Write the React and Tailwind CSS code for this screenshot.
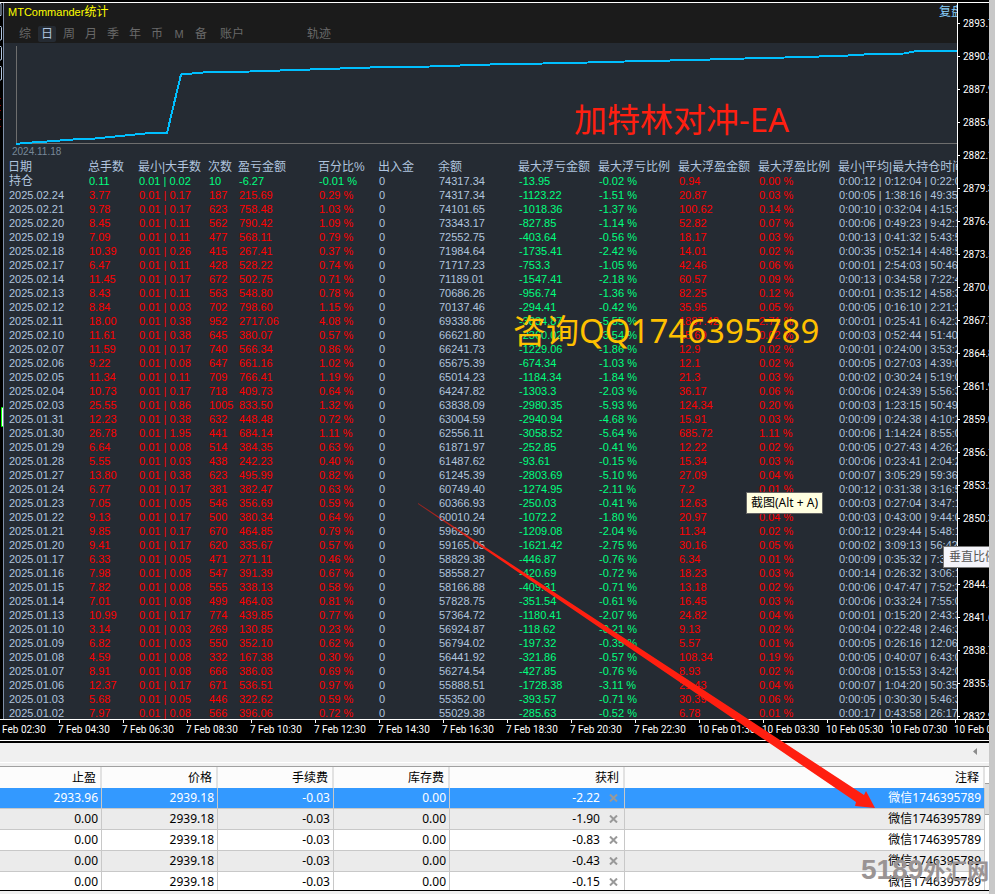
import { useState } from 'react'
import clsx from 'clsx'

const tabs = ['综', '日', '周', '月', '季', '年', '币', 'M', '备']

const columns = [
  { label: '日期', width: 'w-[80px]', tone: 'text-[#b0c4de]' },
  { label: '总手数', width: 'w-[50px]', tone: 'text-[#ff0000]' },
  { label: '最小|大手数', width: 'w-[70px]', tone: 'text-[#ff0000]' },
  { label: '次数', width: 'w-[30px]', tone: 'text-[#ff0000]' },
  { label: '盈亏金额', width: 'w-[80px]', tone: 'text-[#ff0000]' },
  { label: '百分比%', width: 'w-[60px]', tone: 'text-[#ff0000]' },
  { label: '出入金', width: 'w-[60px]', tone: 'text-[#b0c4de]' },
  { label: '余额', width: 'w-[80px]', tone: 'text-[#b0c4de]' },
  { label: '最大浮亏金额', width: 'w-[80px]', tone: 'text-[#00ff7f]' },
  { label: '最大浮亏比例', width: 'w-[80px]', tone: 'text-[#00ff7f]' },
  { label: '最大浮盈金额', width: 'w-[80px]', tone: 'text-[#ff0000]' },
  { label: '最大浮盈比例', width: 'w-[80px]', tone: 'text-[#ff0000]' },
  { label: '最小|平均|最大持仓时间', width: '', tone: 'text-[#b0c4de]' },
]

// date, lots, max lot, orders, profit, %, balance, float loss, %, float gain, %, holding times
const days = [
  ['持仓', '0.11', '0.02', '10', '-6.27', '-0.01', '74317.34', '-13.95', '-0.02', '0.94', '0.00', '0:00:12 | 0:12:04 | 0:22:01'],
  ['2025.02.24', '3.77', '0.17', '187', '215.69', '0.29', '74317.34', '-1123.22', '-1.51', '20.87', '0.03', '0:00:05 | 1:38:16 | 49:35:1'],
  ['2025.02.21', '9.78', '0.17', '623', '758.48', '1.03', '74101.65', '-1018.36', '-1.37', '100.62', '0.14', '0:00:10 | 0:32:04 | 4:15:30'],
  ['2025.02.20', '8.45', '0.11', '562', '790.42', '1.09', '73343.17', '-827.85', '-1.14', '52.82', '0.07', '0:00:06 | 0:49:23 | 9:42:11'],
  ['2025.02.19', '7.09', '0.11', '477', '568.11', '0.79', '72552.75', '-403.64', '-0.56', '18.17', '0.03', '0:00:13 | 0:41:32 | 5:43:50'],
  ['2025.02.18', '10.39', '0.26', '415', '267.41', '0.37', '71984.64', '-1735.41', '-2.42', '14.01', '0.02', '0:00:35 | 0:52:14 | 4:48:51'],
  ['2025.02.17', '6.47', '0.11', '428', '528.22', '0.74', '71717.23', '-753.3', '-1.05', '42.46', '0.06', '0:00:01 | 2:54:03 | 50:46:1'],
  ['2025.02.14', '11.45', '0.17', '672', '502.75', '0.71', '71189.01', '-1547.41', '-2.18', '60.57', '0.09', '0:00:13 | 0:34:58 | 7:22:40'],
  ['2025.02.13', '8.43', '0.11', '563', '548.80', '0.78', '70686.26', '-956.74', '-1.36', '82.25', '0.12', '0:00:01 | 0:35:12 | 4:58:31'],
  ['2025.02.12', '8.84', '0.03', '702', '798.60', '1.15', '70137.46', '-294.41', '-0.42', '35.95', '0.05', '0:00:05 | 0:16:10 | 2:21:30'],
  ['2025.02.11', '18.00', '0.38', '952', '2717.06', '4.08', '69338.86', '-3834.87', '-5.55', '1887.42', '2.71', '0:00:01 | 0:25:41 | 6:42:31'],
  ['2025.02.10', '11.61', '0.38', '645', '380.07', '0.57', '66621.80', '-2360.02', '-3.54', '15.69', '0.02', '0:00:03 | 0:52:44 | 51:40:1'],
  ['2025.02.07', '11.59', '0.17', '740', '566.34', '0.86', '66241.73', '-1229.06', '-1.86', '12.9', '0.02', '0:00:01 | 0:24:00 | 3:53:21'],
  ['2025.02.06', '9.22', '0.08', '647', '661.16', '1.02', '65675.39', '-674.34', '-1.03', '12.1', '0.02', '0:00:05 | 0:27:03 | 4:39:01'],
  ['2025.02.05', '11.34', '0.11', '709', '766.41', '1.19', '65014.23', '-1184.34', '-1.84', '21.3', '0.03', '0:00:02 | 0:30:24 | 5:19:01'],
  ['2025.02.04', '10.73', '0.17', '718', '409.73', '0.64', '64247.82', '-1303.3', '-2.03', '36.17', '0.06', '0:00:06 | 0:24:39 | 5:56:31'],
  ['2025.02.03', '25.55', '0.86', '1005', '833.50', '1.32', '63838.09', '-2980.35', '-5.93', '124.34', '0.20', '0:00:03 | 1:23:15 | 50:49:1'],
  ['2025.01.31', '12.23', '0.38', '632', '448.48', '0.72', '63004.59', '-2940.94', '-4.68', '15.91', '0.03', '0:00:09 | 0:24:38 | 4:10:21'],
  ['2025.01.30', '26.78', '1.95', '441', '684.14', '1.11', '62556.11', '-3058.52', '-5.64', '685.72', '1.11', '0:00:06 | 1:14:24 | 8:55:01'],
  ['2025.01.29', '6.64', '0.08', '514', '384.35', '0.63', '61871.97', '-252.85', '-0.41', '12.22', '0.02', '0:00:05 | 0:27:43 | 4:26:21'],
  ['2025.01.28', '5.55', '0.03', '438', '242.23', '0.40', '61487.62', '-93.61', '-0.15', '15.34', '0.03', '0:00:06 | 0:23:41 | 2:04:21'],
  ['2025.01.27', '13.80', '0.38', '623', '495.99', '0.82', '61245.39', '-2803.69', '-5.10', '27.09', '0.04', '0:00:07 | 3:05:29 | 59:36:1'],
  ['2025.01.24', '6.77', '0.17', '381', '382.47', '0.63', '60749.40', '-1274.95', '-2.11', '7.2', '0.01', '0:00:12 | 0:31:38 | 3:16:51'],
  ['2025.01.23', '7.05', '0.05', '546', '356.69', '0.59', '60366.93', '-250.03', '-0.41', '12.63', '0.02', '0:00:03 | 0:27:04 | 3:47:11'],
  ['2025.01.22', '9.13', '0.17', '500', '380.34', '0.64', '60010.24', '-1072.2', '-1.80', '20.97', '0.04', '0:00:03 | 0:43:00 | 9:44:01'],
  ['2025.01.21', '9.85', '0.17', '670', '464.85', '0.79', '59629.90', '-1209.08', '-2.04', '11.34', '0.02', '0:00:12 | 0:29:44 | 5:48:11'],
  ['2025.01.20', '9.41', '0.17', '620', '335.67', '0.57', '59165.05', '-1621.42', '-2.75', '30.16', '0.05', '0:00:02 | 3:09:13 | 56:42:1'],
  ['2025.01.17', '6.33', '0.05', '471', '271.11', '0.46', '58829.38', '-446.87', '-0.76', '6.34', '0.01', '0:00:09 | 0:35:32 | 7:33:11'],
  ['2025.01.16', '7.98', '0.08', '547', '391.39', '0.67', '58558.27', '-420.69', '-0.72', '18.23', '0.03', '0:00:14 | 0:26:32 | 3:06:11'],
  ['2025.01.15', '7.82', '0.08', '555', '338.13', '0.58', '58166.88', '-409.31', '-0.71', '13.18', '0.02', '0:00:06 | 0:47:47 | 7:52:31'],
  ['2025.01.14', '7.01', '0.08', '499', '464.03', '0.81', '57828.75', '-351.54', '-0.61', '16.45', '0.03', '0:00:06 | 0:33:24 | 7:55:01'],
  ['2025.01.13', '10.99', '0.17', '774', '439.85', '0.77', '57364.72', '-1180.41', '-2.07', '24.82', '0.04', '0:00:01 | 0:15:20 | 2:43:31'],
  ['2025.01.10', '3.14', '0.03', '269', '130.85', '0.23', '56924.87', '-118.62', '-0.21', '9.13', '0.02', '0:00:04 | 0:22:48 | 2:46:31'],
  ['2025.01.09', '6.82', '0.03', '550', '352.10', '0.62', '56794.02', '-197.32', '-0.35', '5.57', '0.01', '0:00:05 | 0:26:16 | 12:06:1'],
  ['2025.01.08', '4.59', '0.08', '332', '167.38', '0.30', '56441.92', '-321.86', '-0.57', '108.34', '0.19', '0:00:05 | 0:40:07 | 6:43:01'],
  ['2025.01.07', '8.91', '0.08', '666', '386.03', '0.69', '56274.54', '-427.85', '-0.76', '8.93', '0.02', '0:00:08 | 0:15:53 | 3:42:01'],
  ['2025.01.06', '12.37', '0.17', '671', '536.51', '0.97', '55888.51', '-1728.38', '-3.11', '21.43', '0.04', '0:00:07 | 1:04:20 | 50:35:1'],
  ['2025.01.03', '5.68', '0.05', '446', '322.62', '0.59', '55352.00', '-393.57', '-0.71', '30.39', '0.06', '0:00:05 | 0:30:30 | 5:46:31'],
  ['2025.01.02', '7.97', '0.08', '566', '396.06', '0.72', '55029.38', '-285.63', '-0.52', '6.78', '0.01', '0:00:17 | 0:43:58 | 26:17:1'],
]

const prices = [
  '2893.7', '2890.8', '2887.9', '2885.0', '2882.1', '2879.3', '2876.4', '2873.5', '2870.6', '2867.7', '2864.8',
  '2861.9', '2859.0', '2856.1', '2853.2', '2850.3', '2847.4', '2844.5', '2841.6', '2838.7', '2835.8', '2832.9',
]

const times = [
  '7 Feb 02:30', '7 Feb 04:30', '7 Feb 06:30', '7 Feb 08:30', '7 Feb 10:30', '7 Feb 12:30', '7 Feb 14:30', '7 Feb 16:30',
  '7 Feb 18:30', '7 Feb 20:30', '7 Feb 22:30', '10 Feb 01:30', '10 Feb 03:30', '10 Feb 05:30', '10 Feb 07:30', '10 Feb 09:30',
]

const orders = [
  { id: 1, tp: '2933.96', profit: '-2.22' },
  { id: 2, tp: '0.00', profit: '-1.90' },
  { id: 3, tp: '0.00', profit: '-0.83' },
  { id: 4, tp: '0.00', profit: '-0.43' },
  { id: 5, tp: '0.00', profit: '-0.15' },
]

const Toolbar = ({ active, onChange }) => (
  <div className="bg-[#1b1b1b] text-[12px] leading-[18px]">
    <div className="flex justify-between pl-1">
      <h1 className="text-[#ffff00]">
        <span className="text-[11px]">MTCommander</span>统计
      </h1>
      <button className="-mr-1.5 text-[#87cefa]">复盘</button>
    </div>
    <div className="flex h-[22px] items-start gap-1 pt-[5px] pl-3 text-[#696969]">
      {tabs.map((tab) => (
        <button
          key={tab}
          onClick={() => onChange(tab)}
          className={clsx(
            'h-4 w-[18px] rounded-xs leading-4',
            tab === 'M' && 'text-[11px]',
            tab === active && 'bg-[#252b33] text-[#b0c4de]'
          )}
        >
          {tab}
        </button>
      ))}
      <button className="ml-1.5 h-4 leading-4">账户</button>
      <button className="ml-[59px] h-4 leading-4">轨迹</button>
    </div>
  </div>
)

const EquityChart = () => (
  <div className="h-[117px]">
    <svg className="block h-[102px] w-full" viewBox="0 0 953 102" preserveAspectRatio="none" shapeRendering="crispEdges">
      <path d="M12.5 3V101M12 100.5H953" stroke="#6e6e6e" fill="none" />
      <path
        d="M12 101L21 100L36 99L50 98L69 96.5L91 95.5L111 93.5L141 90.5L163 90L177 31.5L199 29.5L246 28.5L306 26.5L366 24.5L426 23.5L486 21.5L565 20L621 18.5L689 17L741 15.5L801 14L844 12.5L860 11.5L900 10.5L910 8.5L936 7.5H953"
        stroke="#00bfff"
        strokeWidth="2"
        fill="none"
      />
    </svg>
    <p className="pl-2 text-[10px] leading-[13px] text-[#778899]">2024.11.18</p>
  </div>
)

const StatsTable = () => (
  <table className="-mb-px ml-1 w-full table-fixed text-left text-[11px] leading-[14px] whitespace-nowrap">
    <thead>
      <tr className="h-[14px] text-[12px] text-[#b0c4de]">
        {columns.map((col) => (
          <th key={col.label} className={clsx('p-0 font-normal', col.width)}>{col.label}</th>
        ))}
      </tr>
    </thead>
    <tbody>
      {days.map(([date, lots, maxLot, count, profit, pct, balance, loss, lossPct, gain, gainPct, hold], i) => {
        const cells = [
          date, lots, `0.01 | ${maxLot}`, count, profit, `${pct} %`, '0', balance,
          loss, `${lossPct} %`, gain, `${gainPct} %`, hold,
        ]
        return (
          <tr key={date} className="h-[14px]">
            {cells.map((cell, c) => {
              // open positions sit in the first row and are running at a loss
              const losing = i === 0 && c > 0 && c < 6
              return (
                <td
                  key={columns[c].label}
                  className={clsx('p-0 pl-px', losing ? 'text-[#00ff7f]' : columns[c].tone, i === 0 && c === 0 && 'text-[12px]')}
                >
                  {cell}
                </td>
              )
            })}
          </tr>
        )
      })}
    </tbody>
  </table>
)

const PriceAxis = () => (
  <div className="w-[32px] shrink-0 overflow-hidden border-l border-white pt-1 font-['Roboto','Noto_Sans',sans-serif] text-[10px] text-white">
    <div className="-mb-4">
      {prices.map((price) => (
        <div key={price} className="flex h-[33px] items-center gap-[3px]">
          <span className="h-px w-0.5 shrink-0 bg-white" />
          {price}
        </div>
      ))}
    </div>
  </div>
)

const EdgeStrip = () => (
  <svg className="h-[716px] w-[3px] shrink-0" viewBox="0 0 3 716" fill="none">
    <path
      d="M0 0.5H1V12.5H0M0 23.5H1L1.5 24.5V36L1 37H0M0 43.5H1L1.5 44.5V56L1 57H0M0 63.5H1L1.5 64.5V76L1 77H0"
      stroke="#b0c4de"
    />
    <path d="M0 95.5H1M0 102.5H1M0 107.5H1M0 116.5H1M0 123.5H1" stroke="#8b0000" />
    <path d="M3 404.5H1.5V423.5H3" stroke="#00ff00" />
    <path d="M2 405H3V423H2Z" fill="#fff" />
  </svg>
)

const TimeAxis = () => (
  <div className="flex h-5 overflow-hidden font-['Roboto','Noto_Sans',sans-serif] text-[10px] leading-[14px] text-white">
    <div className="-ml-1.5 flex">
      {times.map((time) => (
        <div key={time} className="w-16 shrink-0 whitespace-nowrap">
          <span className="ml-px block h-[3px] w-px bg-white" />
          {time}
        </div>
      ))}
    </div>
  </div>
)

const headCell = 'border-r-2 border-[#e2e2e2] p-0 pr-1 font-normal'
const bodyCell = 'border-r border-b border-[#c8c8c8] p-0 pr-[3px]'

const OrdersPanel = () => {
  const [selected, setSelected] = useState(1)
  return (
    <section className="font-['Noto_Sans','Noto_Sans_CJK_SC',sans-serif] text-black">
      <div className="flex h-5 items-start justify-end border-b border-white bg-[#f0f0f0] pt-1 pr-3">
        <button aria-label="scroll left" className="mt-px flex">
          <svg className="h-[7px] w-1" viewBox="0 0 4 7"><path d="M4 0V7L0 3.5Z" fill="#8c8c8c" /></svg>
        </button>
      </div>
      <div className="h-1 border-b border-[#a0a0a0] bg-[#f0f0f0]" />
      <div className="flex h-[123px] overflow-hidden bg-white">
        <table className="h-[126px] w-full table-fixed border-separate border-spacing-0 text-right text-[12px] leading-5">
          <thead>
            <tr className="h-[21px] bg-[#fcfcfc]">
              <th className={clsx(headCell, 'w-[102px]')}>止盈</th>
              <th className={clsx(headCell, 'w-[116px]')}>价格</th>
              <th className={clsx(headCell, 'w-[116px]')}>手续费</th>
              <th className={clsx(headCell, 'w-[116px]')}>库存费</th>
              <th className={clsx(headCell, 'w-[175px]')}>获利</th>
              <th className={headCell}>注释</th>
            </tr>
          </thead>
          <tbody>
            {orders.map((order) => (
              <tr
                key={order.id}
                onClick={() => setSelected(order.id)}
                className={clsx(
                  'h-[21px]',
                  order.id === selected ? 'bg-[#3399ff] text-white' : order.id % 2 ? 'bg-white' : 'bg-[#ebebeb]'
                )}
              >
                <td className={bodyCell}>{order.tp}</td>
                <td className={bodyCell}>2939.18</td>
                <td className={bodyCell}>-0.03</td>
                <td className={bodyCell}>0.00</td>
                <td className={bodyCell}>
                  <div className="flex items-center justify-end gap-[9px] pr-[3px]">
                    {order.profit}
                    <button aria-label="close order">
                      <svg className="block h-2 w-[9px]" viewBox="0 0 9 8">
                        <path d="M1 0.5L8 7.5M8 0.5L1 7.5" stroke="#999" strokeWidth="2" />
                      </svg>
                    </button>
                  </div>
                </td>
                <td className={bodyCell}>微信1746395789</td>
              </tr>
            ))}
          </tbody>
        </table>
        <div className="w-1 shrink-0 bg-white pt-4">
          <div className="h-8 border-y border-[#a0a0a0] bg-[#dcdcdc]" />
        </div>
      </div>
      <div className="h-1 border-t border-black bg-[#f0f0f0]" />
    </section>
  )
}

const Annotations = () => (
  <div className="pointer-events-none absolute inset-0 overflow-hidden font-['Noto_Sans','Noto_Sans_CJK_SC',sans-serif] whitespace-nowrap">
    <p className="absolute top-[96px] left-[574px] text-[33px] leading-[48px] text-[#ff1f10]">加特林对冲-EA</p>
    <p className="absolute top-[307px] left-[513px] text-[33px] leading-[48px] text-[#ffc000]">咨询QQ1746395789</p>
    <div className="absolute top-[492px] left-[746px] border border-[#646464] bg-[#ffffe1] px-1 text-[12px] leading-5 text-black">
      截图(Alt + A)
    </div>
    <div className="absolute top-[546px] left-[943px] border border-[#767676] bg-[#f4f4fa] px-[5px] text-[12px] leading-5 text-[#575757]">
      垂直比例
    </div>
    <svg className="absolute top-[500px] left-[414px] h-[312px] w-[466px]" viewBox="414 500 466 312">
      <defs>
        <linearGradient id="fade" gradientUnits="userSpaceOnUse" x1="418" y1="504" x2="500" y2="558">
          <stop offset="0" stopColor="#ff1f10" stopOpacity="0.5" />
          <stop offset="1" stopColor="#ff1f10" />
        </linearGradient>
      </defs>
      <path d="M418 503L864 795L866 791L875 808L855 806L856 802L418 504Z" fill="url(#fade)" />
    </svg>
    <p className="absolute top-[854px] left-[861px] flex items-center font-bold text-[#9a9494]">
      <span className="font-['Liberation_Sans',sans-serif] text-[28px] leading-8">5189</span>
      <span className="text-[22px] leading-8">外汇网</span>
    </p>
  </div>
)

export default function App() {
  const [tab, setTab] = useState('日')

  return (
    <div className="flex bg-black">
      <main className="relative min-w-0 flex-1">
        <div className="mt-0.5 flex border-y border-white font-['Liberation_Sans','Noto_Sans_CJK_SC',sans-serif]">
          <EdgeStrip />
          <section className="min-w-0 flex-1 overflow-hidden border-l border-[#8090a8] bg-[#252b33]">
            <Toolbar active={tab} onChange={setTab} />
            <EquityChart />
            <StatsTable />
          </section>
          <PriceAxis />
        </div>
        <TimeAxis />
        <div className="h-[3px] border-t border-white" />
        <OrdersPanel />
        <Annotations />
      </main>
      <div className="w-1.5 shrink-0 bg-[#c8c8c8]" />
    </div>
  )
}
